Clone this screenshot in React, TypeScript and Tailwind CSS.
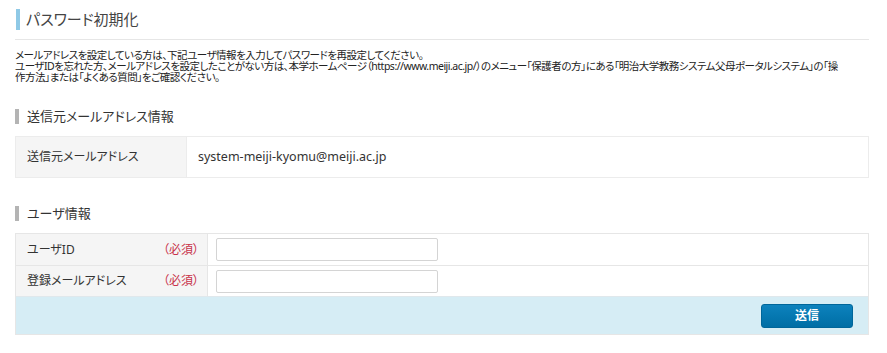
const jp = "font-['Noto_Sans','Noto_Sans_CJK_JP',sans-serif] [font-feature-settings:'palt']";

function SectionHeading({ children }: { children: React.ReactNode }) {
  return (
    <div className="flex items-center h-[15px]">
      <span className="block w-[4px] h-[15px] bg-[#b4b4b4]" />
      <span className="ml-[8px] text-[13px] leading-[15px] text-[#333]">{children}</span>
    </div>
  );
}

function Required() {
  return <span className="text-[12px] text-[#c8334a]">（必須）</span>;
}

export default function App() {
  return (
    <div className={`${jp} w-[854px] mx-[15px] text-[#333] bg-white`}>
      <div className="pt-[9px] pb-[9px] border-b border-[#e6e6e6]">
        <div className="flex items-center h-[21px]">
          <span className="block w-[4px] h-[21px] bg-[#8fc9e6] ml-[1px]" />
          <h1 className="ml-[6px] text-[15px] leading-[21px] text-[#444]">パスワード初期化</h1>
        </div>
      </div>

      <div className="mt-[10px] text-[10.5px] tracking-[-0.5px] text-[#222] whitespace-nowrap">
        <p className="h-[11px] leading-[11px]">
          メールアドレスを設定している方は、下記ユーザ情報を入力してパスワードを再設定してください。
        </p>
        <p className="h-[11px] leading-[11px]">
          ユーザIDを忘れた方、メールアドレスを設定したことがない方は、本学ホームページ（https://www.meiji.ac.jp/）のメニュー「保護者の方」にある「明治大学教務システム父母ポータルシステム」の「操
        </p>
        <p className="h-[11px] leading-[11px]">作方法」または「よくある質問」をご確認ください。</p>
      </div>

      <div className="mt-[26px]">
        <SectionHeading>送信元メールアドレス情報</SectionHeading>
      </div>

      <div className="mt-[12px] border border-[#ececec] flex h-[42px]">
        <div className="w-[171px] bg-[#f5f5f5] border-r border-[#ececec] flex items-center pl-[11px] text-[12px]">
          送信元メールアドレス
        </div>
        <div className="flex-1 flex items-center pl-[11px] text-[12.5px] text-[#333]">
          system-meiji-kyomu@meiji.ac.jp
        </div>
      </div>

      <div className="mt-[28px]">
        <SectionHeading>ユーザ情報</SectionHeading>
      </div>

      <div className="mt-[12px] border border-[#e6e6e6]">
        {["ユーザID", "登録メールアドレス"].map((label, i) => (
          <div key={label} className={`flex h-[31px] ${i > 0 ? "border-t border-[#e6e6e6]" : ""}`}>
            <div className="w-[192px] bg-[#f5f5f5] border-r border-[#e6e6e6] flex items-center justify-between pl-[11px] pr-[8px] text-[12px]">
              <span>{label}</span>
              <Required />
            </div>
            <div className="flex-1 flex items-center pl-[8px]">
              <input type="text" className="w-[222px] h-[23px] border border-[#d4d4d4] rounded-[2px] bg-white outline-none" />
            </div>
          </div>
        ))}
        <div className="h-[38px] bg-[#d6edf5] border-t border-[#e0e8ec] flex items-center justify-end pr-[15px]">
          <button className="w-[92px] h-[24px] rounded-[3px] border border-[#00669a] bg-gradient-to-b from-[#0d82bd] to-[#006ea5] text-white text-[12px] font-bold">
            送信
          </button>
        </div>
      </div>
    </div>
  );
}
